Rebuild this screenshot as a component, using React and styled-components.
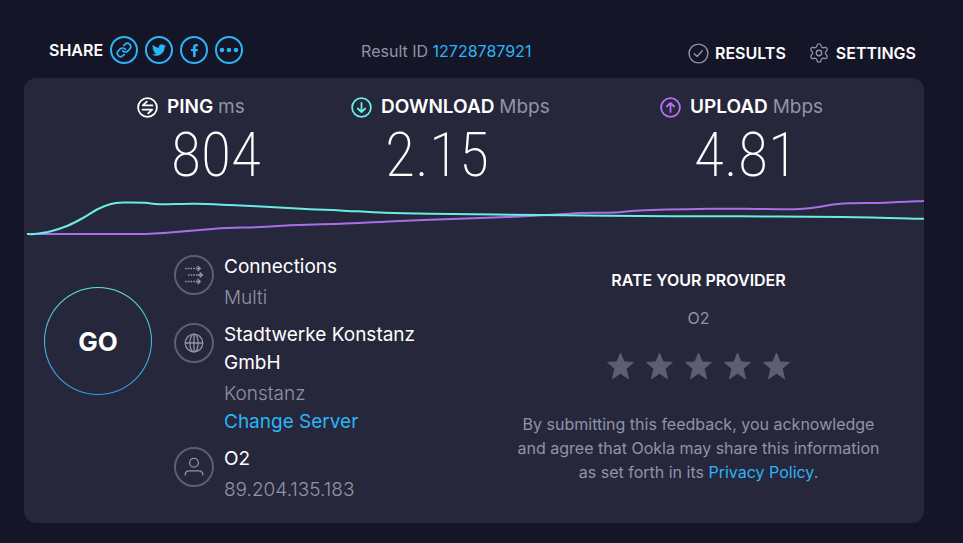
import React from 'react';
import styled, { createGlobalStyle } from 'styled-components';
import { Link as LinkIcon, Settings } from 'lucide-react';
import { FaTwitter, FaFacebookF } from 'react-icons/fa';

const GlobalStyle = createGlobalStyle`
	*, *::before, *::after {
		box-sizing: border-box;
	}
	body {
		margin: 0;
		background: #141526;
		color: #fff;
		font-family: Inter, 'Open Sans', sans-serif;
	}
	button {
		padding: 0;
		border: 0;
		background: none;
		color: inherit;
		font-family: inherit;
		cursor: pointer;
	}
	a {
		color: #2bb5f8;
		text-decoration: none;
	}
	h2, p, dl, dd {
		margin: 0;
	}
	svg {
		display: block;
		flex: none;
	}
`;

const Page = styled.div`
	padding: 0 39px 20px 24px;
`;

const Header = styled.header`
	display: flex;
	align-items: center;
	height: 78px;
	padding: 28px 8px 0 25px;
	font-size: 16px;
`;

const Share = styled.div`
	display: flex;
	align-items: center;
	gap: 7px;
	padding-bottom: 6px;
	font-weight: 600;
`;

const ShareButton = styled.button`
	display: flex;
	align-items: center;
	justify-content: center;
	width: 28px;
	height: 28px;
	border: 2px solid #2bb5f8;
	border-radius: 50%;
	color: #2bb5f8;
`;

const ResultId = styled.p`
	margin-left: 118px;
	padding-bottom: 4px;
	color: #9193a8;
`;

const Nav = styled.nav`
	display: flex;
	gap: 22px;
	margin-left: auto;
`;

const NavLink = styled.a`
	display: flex;
	align-items: center;
	gap: 6px;
	color: #fff;
	font-weight: 600;
	svg {
		color: #9193a8;
	}
`;

const Card = styled.main`
	padding: 17px 0 19px;
	border-radius: 12px;
	background: #26273b;
`;

const Metrics = styled.dl`
	display: grid;
	grid-template-columns: 214fr 309fr 264fr;
	padding-left: 113px;
`;

const MetricLabel = styled.dt`
	display: flex;
	align-items: center;
	gap: 9px;
	height: 24px;
	font-size: 19px;
	font-weight: 600;
	line-height: 24px;
	svg {
		color: ${({ $color }) => $color};
	}
`;

const Unit = styled.span`
	color: #9193a8;
	font-weight: 400;
`;

const MetricValue = styled.dd`
	padding: 6px 0 0 34px;
	font-family: 'Roboto Condensed', 'Liberation Sans Narrow', Roboto, sans-serif;
	font-size: 62px;
	font-weight: 200;
	line-height: 60px;
`;

const Chart = styled.svg`
	width: 100%;
	height: 44px;
	margin: 11px 0 13px;
	path {
		fill: none;
		stroke-width: 2;
		vector-effect: non-scaling-stroke;
	}
`;

const Details = styled.div`
	display: grid;
	grid-template-columns: 108px 1fr 451px;
	column-gap: 22px;
	padding-left: 20px;
`;

const GoButton = styled.button`
	width: 108px;
	height: 108px;
	margin-top: 34px;
	border: 1px solid transparent;
	border-radius: 50%;
	background:
		linear-gradient(#26273b, #26273b) padding-box,
		linear-gradient(#5ce8dc, #2b9fe8) border-box;
	font-size: 26px;
	font-weight: 700;
`;

const InfoList = styled.div`
	display: flex;
	flex-direction: column;
	gap: 9px;
`;

const InfoRow = styled.section`
	display: flex;
	gap: 10px;
	font-size: 19px;
	line-height: 28px;
`;

const InfoIcon = styled.span`
	display: flex;
	flex: none;
	align-items: center;
	justify-content: center;
	width: 40px;
	height: 40px;
	margin-top: 2px;
	border: 2px solid #5d5e73;
	border-radius: 50%;
	color: #9193a8;
`;

const InfoTitle = styled.h2`
	padding-bottom: 3px;
	font-size: 19px;
	font-weight: 400;
`;

const InfoText = styled.p`
	color: #9193a8;
	font-weight: 300;
`;

const Rating = styled.section`
	display: flex;
	flex-direction: column;
	align-items: center;
	padding-top: 15px;
	color: #9193a8;
	font-size: 16px;
	line-height: 24px;
	text-align: center;
`;

const RatingTitle = styled.h2`
	color: #fff;
	font-size: 16px;
	font-weight: 600;
`;

const Provider = styled.p`
	padding: 14px 0 22px;
`;

const Stars = styled.div`
	display: flex;
	gap: 12px;
	margin-bottom: 32px;
	color: #5d5e73;
`;

const Legal = styled.p`
	max-width: 380px;
`;

const download = [
	[3, 38], [10, 38], [26, 35.5], [43, 30], [59, 22], [73, 13.5], [86, 8.3], [99, 6.6], [121, 6.8], [136, 8.2],
	[171, 7.7], [206, 9], [246, 11], [286, 13.3], [316, 14.4], [361, 16.8], [406, 17.8], [516, 19], [616, 20],
	[716, 20.3], [819, 21], [900, 22.8],
];

const upload = [
	[3, 38], [60, 38], [110, 38], [126, 37.8], [146, 36.5], [191, 32.7], [236, 31], [266, 29.2], [316, 27.8],
	[361, 25.7], [406, 23.8], [456, 22], [496, 20.5], [536, 18.3], [556, 17], [591, 16.6], [616, 14.4], [686, 12.8],
	[721, 12.7], [771, 13.2], [791, 11.5], [806, 9], [824, 7.2], [861, 6.7], [900, 5],
];

// Catmull-Rom spline through the samples
const smooth = (points) =>
	points.reduce((d, [x, y], i) => {
		if (i === 0) return `M${x} ${y}`;
		const [px, py] = points[i - 1];
		const [bx, by] = points[i - 2] || points[i - 1];
		const [nx, ny] = points[i + 1] || points[i];
		return `${d}C${px + (x - bx) / 6} ${py + (y - by) / 6} ${x - (nx - px) / 6} ${y - (ny - py) / 6} ${x} ${y}`;
	}, '');

const RoundIcon = ({ children, width = 1.8 }) => (
	<svg
		width="21"
		height="21"
		viewBox="0 0 21 21"
		fill="none"
		stroke="currentColor"
		strokeWidth={width}
		strokeLinecap="round"
		strokeLinejoin="round"
		aria-hidden="true"
	>
		<circle cx="10.5" cy="10.5" r="9.4" />
		{children}
	</svg>
);

const metrics = [
	{ name: 'PING', unit: 'ms', value: '804', color: '#fff', icon: <path d="M9.8 4.6 5.8 8.4h9.6M5.6 12.6h9.6l-4 3.8" /> },
	{ name: 'DOWNLOAD', unit: 'Mbps', value: '2.15', color: '#6aede5', icon: <path d="M10.5 6v9M6.8 11.5l3.7 3.5 3.7-3.5" /> },
	{ name: 'UPLOAD', unit: 'Mbps', value: '4.81', color: '#b871f5', icon: <path d="M10.5 15V6M6.8 9.5 10.5 6l3.7 3.5" /> },
];

const ConnectionsIcon = () => (
	<svg width="20" height="20" viewBox="0 0 20 20" fill="none" stroke="currentColor" strokeWidth="1.3" aria-hidden="true">
		<path d="M1 3.5h12M4 10h12M1 16.5h12" strokeDasharray="1.6 1.1" />
		<path d="m13.5 1 2.8 2.5L13.5 6M15.7 7.5l2.8 2.5-2.8 2.5M13.5 14l2.8 2.5-2.8 2.5M12 3.5h4M14 10h4M12 16.5h4" />
	</svg>
);

const GlobeIcon = () => (
	<svg width="20" height="20" viewBox="0 0 20 20" fill="none" stroke="currentColor" strokeWidth="1.3" aria-hidden="true">
		<circle cx="10" cy="10" r="8.8" />
		<ellipse cx="10" cy="10" rx="4.2" ry="8.8" />
		<path d="M1.2 10h17.6M10 1.2v17.6" />
	</svg>
);

const UserIcon = () => (
	<svg width="20" height="20" viewBox="0 0 20 20" fill="none" stroke="currentColor" strokeWidth="1.3" aria-hidden="true">
		<circle cx="10" cy="5.8" r="4.4" />
		<path d="M1.2 18.4v-.6c0-2.6 1.8-4 4.2-4h9.2c2.4 0 4.2 1.4 4.2 4v.6" />
	</svg>
);

const StarIcon = () => (
	<svg width="27" height="28" viewBox="0 0 27 28" fill="currentColor" stroke="currentColor" strokeLinejoin="round" aria-hidden="true">
		<path d="M13.5 1 17 9.9l9.4.5-7.2 6.2 2.3 10.2-8-5.5-8 5.5 2.3-10.2-7.2-6.2 9.4-.5z" />
	</svg>
);

function App() {
	return (
		<>
			<GlobalStyle />
			<Page>
				<Header>
					<Share>
						SHARE
						<ShareButton aria-label="Copy link">
							<LinkIcon size={16} strokeWidth={2.6} />
						</ShareButton>
						<ShareButton aria-label="Twitter">
							<FaTwitter size={14} />
						</ShareButton>
						<ShareButton aria-label="Facebook">
							<FaFacebookF size={13} />
						</ShareButton>
						<ShareButton aria-label="More">
							<svg width="20" height="6" viewBox="0 0 20 6" fill="currentColor">
								<circle cx="3" cy="3" r="2.3" />
								<circle cx="10" cy="3" r="2.3" />
								<circle cx="17" cy="3" r="2.3" />
							</svg>
						</ShareButton>
					</Share>
					<ResultId>
						Result ID <a href="#result">12728787921</a>
					</ResultId>
					<Nav>
						<NavLink href="#results">
							<RoundIcon width={1.4}>
								<path d="m6.3 10.8 2.8 2.7 5.2-5.8" />
							</RoundIcon>
							RESULTS
						</NavLink>
						<NavLink href="#settings">
							<Settings size={22} strokeWidth={1.4} />
							SETTINGS
						</NavLink>
					</Nav>
				</Header>
				<Card>
					<Metrics>
						{metrics.map(({ name, unit, value, color, icon }) => (
							<div key={name}>
								<MetricLabel $color={color}>
									<RoundIcon>{icon}</RoundIcon>
									<span>
										{name} <Unit>{unit}</Unit>
									</span>
								</MetricLabel>
								<MetricValue>{value}</MetricValue>
							</div>
						))}
					</Metrics>
					<Chart viewBox="0 0 900 44" preserveAspectRatio="none" role="img" aria-label="Speed over time">
						<path d={smooth(upload)} stroke="#a96fe8" />
						<path d={smooth(download)} stroke="#6aede5" />
					</Chart>
					<Details>
						<GoButton>GO</GoButton>
						<InfoList>
							<InfoRow>
								<InfoIcon>
									<ConnectionsIcon />
								</InfoIcon>
								<div>
									<InfoTitle>Connections</InfoTitle>
									<InfoText>Multi</InfoText>
								</div>
							</InfoRow>
							<InfoRow>
								<InfoIcon>
									<GlobeIcon />
								</InfoIcon>
								<div>
									<InfoTitle>Stadtwerke Konstanz GmbH</InfoTitle>
									<InfoText>Konstanz</InfoText>
									<a href="#server">Change Server</a>
								</div>
							</InfoRow>
							<InfoRow>
								<InfoIcon>
									<UserIcon />
								</InfoIcon>
								<div>
									<InfoTitle>O2</InfoTitle>
									<InfoText>89.204.135.183</InfoText>
								</div>
							</InfoRow>
						</InfoList>
						<Rating>
							<RatingTitle>RATE YOUR PROVIDER</RatingTitle>
							<Provider>O2</Provider>
							<Stars>
								{[1, 2, 3, 4, 5].map((n) => (
									<button key={n} aria-label={`Rate ${n} of 5`}>
										<StarIcon />
									</button>
								))}
							</Stars>
							<Legal>
								By submitting this feedback, you acknowledge and agree that Ookla may share this information as set forth
								in its <a href="#privacy">Privacy Policy</a>.
							</Legal>
						</Rating>
					</Details>
				</Card>
			</Page>
		</>
	);
}

export default App;
